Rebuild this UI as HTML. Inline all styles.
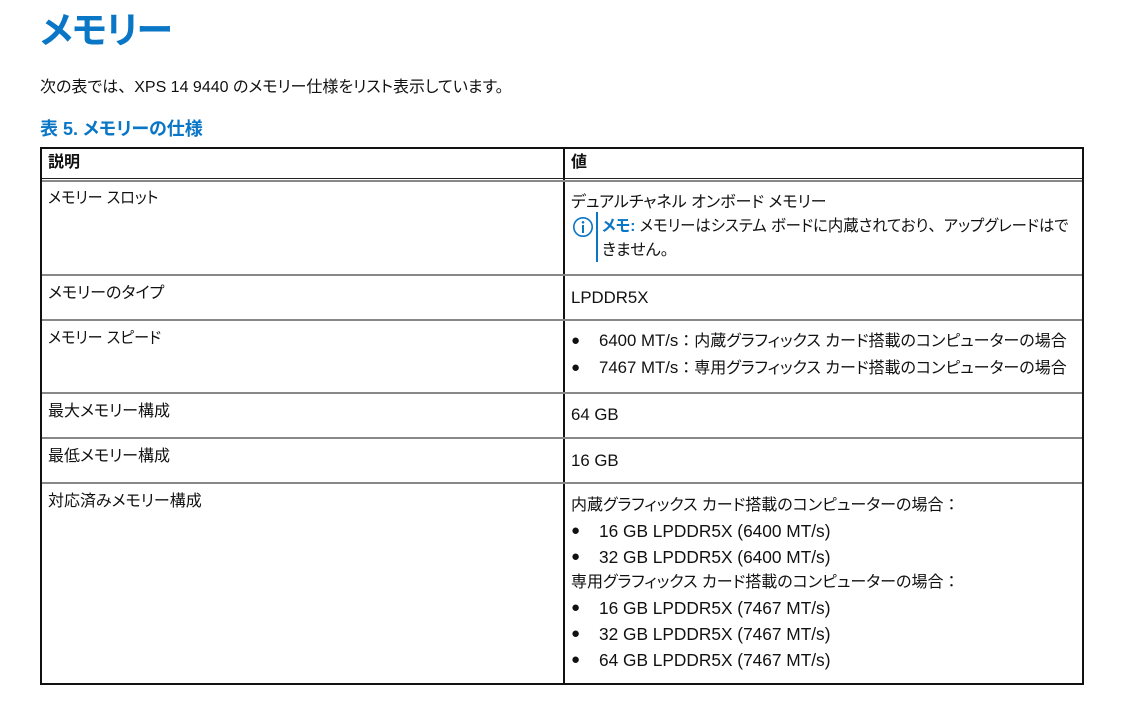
<!DOCTYPE html>
<html><head><meta charset="utf-8"><style>
body{margin:0;width:1128px;height:721px;background:#fff;position:relative;overflow:hidden;font-family:"Liberation Sans","Noto Sans CJK JP",sans-serif;color:#111;font-feature-settings:"palt" 1}
.a{position:absolute;white-space:nowrap;transform-origin:left center}
.t{font-size:16px;line-height:20px}
.blue{color:#0a76c6}
.b{position:absolute;font-size:15px;line-height:20px}
.l{font-size:16.8px}
.p{display:inline-block;width:1em;font-feature-settings:normal}
</style></head><body>
<div class="a blue" style="left:40px;top:7px;font-size:37px;font-weight:bold;line-height:48px;letter-spacing:-1px">メモリー</div>
<div class="a t" style="left:40px;top:78px">次の表では<span class="p">、</span>XPS 14 9440 のメモリー仕様をリスト表示しています。</div>
<div class="a blue" style="left:40px;top:117px;font-size:18px;font-weight:bold;line-height:24px">表 5. メモリーの仕様</div>

<div class="a" style="left:40px;top:147px;width:1040px;height:534px;border:2px solid #111"></div>
<div class="a" style="left:563px;top:147px;width:2px;height:538px;background:#111"></div>
<div class="a" style="left:42px;top:178px;width:1040px;height:1px;background:#222"></div>
<div class="a" style="left:42px;top:180px;width:1040px;height:2px;background:#888"></div>
<div class="a" style="left:42px;top:274px;width:1040px;height:2px;background:#888"></div>
<div class="a" style="left:42px;top:319px;width:1040px;height:2px;background:#888"></div>
<div class="a" style="left:42px;top:392px;width:1040px;height:2px;background:#888"></div>
<div class="a" style="left:42px;top:437px;width:1040px;height:2px;background:#888"></div>
<div class="a" style="left:42px;top:482px;width:1040px;height:2px;background:#888"></div>

<div class="a t" style="left:48px;top:153px;font-weight:bold">説明</div>
<div class="a t" style="left:571px;top:153px;font-weight:bold">値</div>

<div class="a t" style="left:48px;top:189px;transform:scaleX(0.94)">メモリー スロット</div>
<div class="a t" style="left:571px;top:193px">デュアルチャネル オンボード メモリー</div>
<svg class="a" style="left:572px;top:216px" width="22" height="22" viewBox="0 0 22 22"><circle cx="11" cy="11" r="9.2" fill="none" stroke="#0a76c6" stroke-width="1.6"/><circle cx="11" cy="6.3" r="1.3" fill="#0a76c6"/><rect x="10" y="9" width="2" height="8" fill="#0a76c6"/></svg>
<div class="a" style="left:596px;top:212px;width:2px;height:50px;background:#0a76c6"></div>
<div class="a t" style="left:602px;top:217px;transform:scaleX(0.96)"><b class="blue">メモ:</b> メモリーはシステム ボードに内蔵されており<span class="p">、</span>アップグレードはで</div>
<div class="a t" style="left:602px;top:241px">きません。</div>

<div class="a t" style="left:48px;top:284px">メモリーのタイプ</div>
<div class="a t l" style="left:571px;top:288px">LPDDR5X</div>

<div class="a t" style="left:48px;top:329px;transform:scaleX(0.94)">メモリー スピード</div>
<div class="b" style="left:571px;top:331px">●</div><div class="a t" style="left:599px;top:331px"><span class="l">6400 MT/s</span><span class="p">：</span>内蔵グラフィックス カード搭載のコンピューターの場合</div>
<div class="b" style="left:571px;top:358px">●</div><div class="a t" style="left:599px;top:358px"><span class="l">7467 MT/s</span><span class="p">：</span>専用グラフィックス カード搭載のコンピューターの場合</div>

<div class="a t" style="left:48px;top:402px">最大メモリー構成</div>
<div class="a t l" style="left:571px;top:405px">64 GB</div>

<div class="a t" style="left:48px;top:447px">最低メモリー構成</div>
<div class="a t l" style="left:571px;top:451px">16 GB</div>

<div class="a t" style="left:48px;top:492px">対応済みメモリー構成</div>
<div class="a t" style="left:571px;top:496px">内蔵グラフィックス カード搭載のコンピューターの場合<span class="p">：</span></div>
<div class="b" style="left:571px;top:521px">●</div><div class="a t l" style="left:599px;top:521px;font-size:17.3px">16 GB LPDDR5X (6400 MT/s)</div>
<div class="b" style="left:571px;top:547px">●</div><div class="a t l" style="left:599px;top:547px;font-size:17.3px">32 GB LPDDR5X (6400 MT/s)</div>
<div class="a t" style="left:571px;top:573px">専用グラフィックス カード搭載のコンピューターの場合<span class="p">：</span></div>
<div class="b" style="left:571px;top:598px">●</div><div class="a t l" style="left:599px;top:598px;font-size:17.3px">16 GB LPDDR5X (7467 MT/s)</div>
<div class="b" style="left:571px;top:624px">●</div><div class="a t l" style="left:599px;top:624px;font-size:17.3px">32 GB LPDDR5X (7467 MT/s)</div>
<div class="b" style="left:571px;top:650px">●</div><div class="a t l" style="left:599px;top:650px;font-size:17.3px">64 GB LPDDR5X (7467 MT/s)</div>
</body></html>
